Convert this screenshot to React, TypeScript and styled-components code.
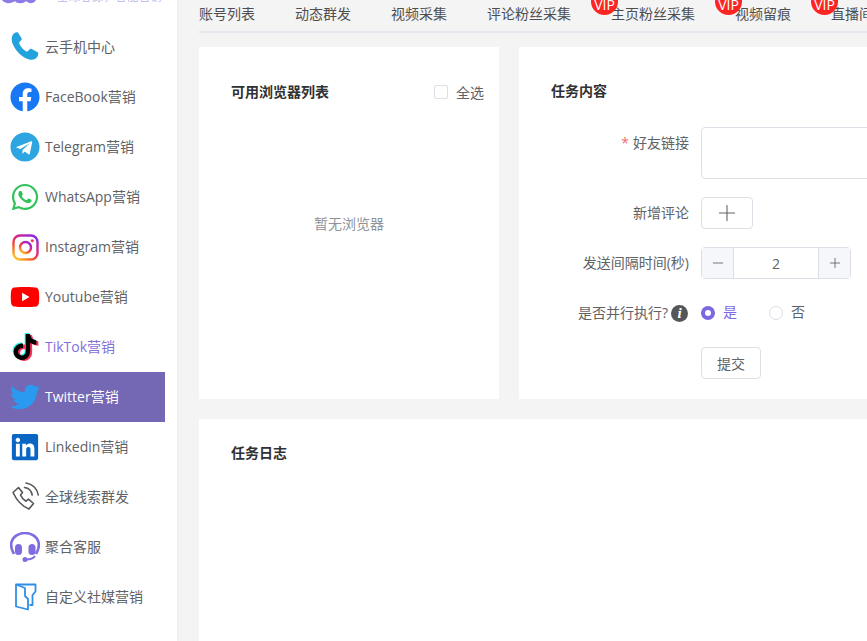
import React from "react";
import styled, { createGlobalStyle } from "styled-components";
import { FaFacebook, FaTelegram, FaWhatsapp, FaTwitter, FaLinkedin, FaTiktok, FaYoutube } from "react-icons/fa";
import { Plus, Minus } from "lucide-react";

const Global = createGlobalStyle`
  html, body { margin: 0; padding: 0; width: 867px; height: 641px; overflow: hidden; background: #f4f4f5; }
  body { font-family: "Open Sans", "Noto Sans CJK SC", sans-serif; font-size: 14px; color: #606266; }
  * { box-sizing: border-box; }
`;

const Page = styled.div`
  display: flex;
  width: 867px;
  height: 641px;
  overflow: hidden;
`;
const Sidebar = styled.aside`
  flex: 0 0 177px;
  background: #fff;
  padding-right: 12px;
  box-shadow: 1px 0 2px rgba(0, 0, 0, 0.04);
`;
const LogoBar = styled.div`
  height: 22px;
  display: flex;
  overflow: hidden;
  align-items: flex-start;
`;
const LogoMark = styled.svg`
  flex: 0 0 auto;
  width: 57px;
  height: 4px;
`;
const LogoSlogan = styled.div`
  margin-top: -9px;
  font-size: 11px;
  line-height: 12px;
  letter-spacing: 0.7px;
  color: #bdb4ee;
  white-space: nowrap;
`;
const NavItem = styled.div<{ $state?: "active" | "hover" }>`
  height: 50px;
  display: flex;
  align-items: center;
  gap: 5px;
  padding: 0 0 2px 10px;
  white-space: nowrap;
  background: ${(p) => (p.$state === "active" ? "#7467b3" : "transparent")};
  color: ${(p) => (p.$state === "active" ? "#fff" : p.$state === "hover" ? "#8471d8" : "#606266")};
`;
const NavIcon = styled.span<{ $start?: boolean }>`
  flex: 0 0 30px;
  width: 30px;
  height: 30px;
  margin-top: 2px;
  display: flex;
  align-items: center;
  justify-content: ${(p) => (p.$start ? "flex-start" : "center")};
`;
const Main = styled.main`
  flex: 0 0 auto;
  width: 760px;
  padding-left: 22px;
  display: flex;
  flex-direction: column;
`;
const Tabs = styled.nav`
  flex: 0 0 33px;
  width: 740px;
  display: flex;
  gap: 40px;
  border-bottom: 2px solid #e4e7ed;
  white-space: nowrap;
  color: #606266;
`;
const Tab = styled.div`
  position: relative;
  flex: 0 0 auto;
  line-height: 27px;
  height: 27px;
  color: #303133;
  opacity: 0.85;
`;
const Vip = styled.span`
  position: absolute;
  left: -20px;
  top: -12px;
  width: 27px;
  height: 27px;
  border-radius: 50%;
  background: #f00;
  color: #fff;
  font-size: 14px;
  line-height: 33px;
  text-align: center;
`;
const Row = styled.div`
  display: flex;
  flex: 0 0 auto;
  gap: 20px;
  margin-top: 14px;
`;
const Card = styled.section`
  background: #fff;
`;
const BrowserCard = styled(Card)`
  flex: 0 0 300px;
  height: 352px;
  padding: 33px 15px 0 32px;
  display: flex;
  flex-direction: column;
`;
const TaskCard = styled(Card)`
  flex: 0 0 440px;
  height: 352px;
  padding: 32px 0 0 32px;
`;
const LogCard = styled(Card)`
  flex: 0 0 260px;
  width: 740px;
  margin-top: 20px;
  padding: 22px 32px;
`;
const CardHead = styled.div`
  display: flex;
  align-items: center;
  justify-content: space-between;
  height: 24px;
`;
const Title = styled.h3`
  margin: 0;
  font-size: 14px;
  line-height: 24px;
  font-weight: 700;
  color: #303133;
`;
const CheckLabel = styled.label`
  display: flex;
  align-items: center;
  gap: 8px;
  color: #606266;
`;
const CheckBox = styled.span`
  width: 14px;
  height: 14px;
  border: 1px solid #dcdfe6;
  border-radius: 2px;
`;
const Empty = styled.div`
  flex: 0 0 auto;
  margin-top: 108px;
  padding-right: 17px;
  text-align: center;
  line-height: 24px;
  color: #909399;
`;
const Form = styled.div`
  margin-top: 24px;
  display: flex;
  flex-direction: column;
  gap: 18px;
`;
const FormRow = styled.div`
  display: flex;
  align-items: flex-start;
`;
const Label = styled.div`
  flex: 0 0 138px;
  height: 32px;
  padding-bottom: 2px;
  display: flex;
  align-items: center;
  justify-content: flex-end;
  white-space: nowrap;
  color: #606266;
`;
const Req = styled.span`
  color: #f56c6c;
  margin-right: 4px;
`;
const Control = styled.div`
  margin-left: 12px;
  min-height: 32px;
  display: flex;
  align-items: center;
`;
const TextArea = styled.div`
  width: 300px;
  height: 52px;
  border: 1px solid #dcdfe6;
  border-radius: 4px;
  background: #fff;
`;
const Btn = styled.div`
  height: 32px;
  padding-bottom: 1px;
  border: 1px solid #dcdfe6;
  border-radius: 4px;
  display: flex;
  align-items: center;
  justify-content: center;
  background: #fff;
  color: #606266;
`;
const AddBtn = styled(Btn)`
  width: 52px;
`;
const SubmitBtn = styled(Btn)`
  width: 60px;
`;
const Stepper = styled.div`
  width: 150px;
  height: 32px;
  border: 1px solid #dcdfe6;
  border-radius: 4px;
  display: flex;
  align-items: center;
`;
const StepBtn = styled.span<{ $side: "l" | "r" }>`
  flex: 0 0 32px;
  height: 30px;
  display: flex;
  align-items: center;
  justify-content: center;
  background: #f5f7fa;
  border-${(p) => (p.$side === "l" ? "right" : "left")}: 1px solid #dcdfe6;
  color: #55565a;
`;
const StepVal = styled.span`
  flex: 1;
  text-align: center;
  color: #606266;
`;
const RadioGroup = styled.div`
  display: flex;
  align-items: center;
  gap: 32px;
`;
const RadioItem = styled.label<{ $on?: boolean }>`
  display: flex;
  align-items: center;
  gap: 8px;
  line-height: 18px;
  color: ${(p) => (p.$on ? "#7c68e0" : "#606266")};
`;
const RadioText = styled.span`
  margin-top: -2px;
`;
const RadioDot = styled.span<{ $on?: boolean }>`
  width: 14px;
  height: 14px;
  border-radius: 50%;
  border: ${(p) => (p.$on ? "4.5px solid #7c68e0" : "1px solid #dcdfe6")};
  background: #fff;
`;
const Info = styled.span`
  width: 17px;
  height: 17px;
  margin: 2px 1px 0 3px;
  border-radius: 50%;
  background: #55565a;
  color: #fff;
  font-family: "Liberation Serif", serif;
  font-style: italic;
  font-weight: 700;
  font-size: 15px;
  line-height: 17px;
  text-align: center;
`;

const PhoneIcon = () => (
  <svg width="30" height="32" viewBox="0 0 30 32">
    <path
      d="M3 3.500C4.500 1.500 7 .8 8 1.600l3.600 5.600c.6 1-.2 2-1.400 3-1 .8-1.200 1.700-.6 3 1.400 3 3.600 5.300 6.200 7 1.100.7 2 .4 2.800-.7 1-1.300 2-2 3.100-1.500l6 3.300c1 .6.800 3.200-1 5.300-1.800 2-4.500 2.700-7.500 1.900C12 26.300 5.400 20 2.400 12.200 1.200 9 1.500 5.600 3 3.500Z"
      fill="#23a3dd"
    />
  </svg>
);

const InstagramIcon = () => (
  <svg width="27" height="27" viewBox="0 0 27 27">
    <defs>
      <linearGradient id="ig" x1="0.15" y1="1" x2="0.85" y2="0">
        <stop offset="0" stopColor="#fdc62e" />
        <stop offset="0.35" stopColor="#f5502f" />
        <stop offset="0.65" stopColor="#d9248f" />
        <stop offset="1" stopColor="#8a2be2" />
      </linearGradient>
    </defs>
    <rect x="1.500" y="1.500" width="24" height="24" rx="6.500" fill="none" stroke="url(#ig)" strokeWidth="2.400" />
    <circle cx="13.500" cy="13.500" r="5.500" fill="none" stroke="url(#ig)" strokeWidth="2.400" />
    <circle cx="20.200" cy="6.800" r="1.600" fill="url(#ig)" />
  </svg>
);

const TiktokStack = styled.span`
  position: relative;
  width: 26px;
  height: 26px;
`;
const TiktokLayer = styled.span<{ $c: string; $x: number; $y: number }>`
  position: absolute;
  left: ${(p) => p.$x}px;
  top: ${(p) => p.$y}px;
  color: ${(p) => p.$c};
  display: flex;
`;
const TiktokIcon = () => (
  <TiktokStack>
    <TiktokLayer $c="#25f4ee" $x={-1.5} $y={-1}><FaTiktok size={26} /></TiktokLayer>
    <TiktokLayer $c="#fe2c55" $x={1.5} $y={1}><FaTiktok size={26} /></TiktokLayer>
    <TiktokLayer $c="#000" $x={0} $y={0}><FaTiktok size={26} /></TiktokLayer>
  </TiktokStack>
);

const CallIcon = () => (
  <svg width="30" height="30" viewBox="0 0 30 30" fill="none" stroke="#55565a" strokeWidth="1.600" strokeLinejoin="round">
    <path d="M3 10.500 8.500 5.500 12.500 10.500 10.500 13c1 2.500 3 4.700 5.500 6.200l2.500-2 5 4.300-4.500 5.500C12.500 24.500 6.500 18 3 10.500Z" />
    <path d="M14.500 5.500c4 .5 7 3.500 7.700 7.500" strokeLinecap="round" />
    <path d="M16 1c6.500.8 11.500 6 12.300 12" strokeLinecap="round" />
  </svg>
);

const HeadsetIcon = () => (
  <svg width="30" height="30" viewBox="0 0 30 30">
    <path d="M3.500 21C1.200 17 .8 13 1.500 10 3 4.500 9 1 15 1s12 3.500 13.500 9c.7 3 .3 7-2 11" fill="none" stroke="#7f6ce0" strokeWidth="2.600" strokeLinecap="round" />
    <rect x="5" y="12" width="7" height="11" rx="3.500" fill="#7f6ce0" />
    <rect x="18.500" y="12" width="7" height="11" rx="3.500" fill="#7f6ce0" />
    <path d="M25 24c-2 3-5 3.500-9 3.500" fill="none" stroke="#7f6ce0" strokeWidth="2" />
    <circle cx="15" cy="27.500" r="2.500" fill="#7f6ce0" />
  </svg>
);

const DoorIcon = () => (
  <svg width="24" height="28" viewBox="0 0 24 28" fill="none" stroke="#2f8fe6" strokeWidth="1.800" strokeLinejoin="round">
    <path d="M3 1.500h19.500v7l-3 3.500v10h-3" />
    <path d="M3 1.500v22l12 3V16l-3-3V5L3 1.500Z" fill="#fff" />
  </svg>
);

const nav: { label: string; icon: React.ReactNode; state?: "active" | "hover"; start?: boolean }[] = [
  { label: "云手机中心", icon: <PhoneIcon /> },
  { label: "FaceBook营销", icon: <FaFacebook size={30} color="#1877f2" /> },
  { label: "Telegram营销", icon: <FaTelegram size={30} color="#2ca5e0" /> },
  { label: "WhatsApp营销", icon: <FaWhatsapp size={30} color="#2fc25b" />, start: true },
  { label: "Instagram营销", icon: <InstagramIcon /> },
  { label: "Youtube营销", icon: <FaYoutube size={30} color="#f00" /> },
  { label: "TikTok营销", icon: <TiktokIcon />, state: "hover" },
  { label: "Twitter营销", icon: <FaTwitter size={30} color="#2a9af0" />, state: "active" },
  { label: "Linkedin营销", icon: <FaLinkedin size={30} color="#0a66c2" />, start: true },
  { label: "全球线索群发", icon: <CallIcon /> },
  { label: "聚合客服", icon: <HeadsetIcon /> },
  { label: "自定义社媒营销", icon: <DoorIcon /> },
];

const tabs: { label: string; vip?: boolean }[] = [
  { label: "账号列表" },
  { label: "动态群发" },
  { label: "视频采集" },
  { label: "评论粉丝采集" },
  { label: "主页粉丝采集", vip: true },
  { label: "视频留痕", vip: true },
  { label: "直播间互动", vip: true },
];

export default function App() {
  return (
    <Page>
      <Global />
      <Sidebar>
        <LogoBar>
          <LogoMark viewBox="0 0 57 4">
            <path d="M2 0c3 4 9 4 13 1 1.500 3 9 3 11 0 3 3 8 3 10-1Z" fill="#8f7be6" />
          </LogoMark>
          <LogoSlogan>全球客源，智能营销</LogoSlogan>
        </LogoBar>
        {nav.map((n) => (
          <NavItem key={n.label} $state={n.state}>
            <NavIcon $start={n.start}>{n.icon}</NavIcon>
            {n.label}
          </NavItem>
        ))}
      </Sidebar>
      <Main>
        <Tabs>
          {tabs.map((t) => (
            <Tab key={t.label}>
              {t.vip && <Vip>VIP</Vip>}
              {t.label}
            </Tab>
          ))}
        </Tabs>
        <Row>
          <BrowserCard>
            <CardHead>
              <Title>可用浏览器列表</Title>
              <CheckLabel>
                <CheckBox />
                全选
              </CheckLabel>
            </CardHead>
            <Empty>暂无浏览器</Empty>
          </BrowserCard>
          <TaskCard>
            <Title>任务内容</Title>
            <Form>
              <FormRow>
                <Label>
                  <Req>*</Req>好友链接
                </Label>
                <Control>
                  <TextArea />
                </Control>
              </FormRow>
              <FormRow>
                <Label>新增评论</Label>
                <Control>
                  <AddBtn>
                    <Plus size={26} strokeWidth={1} />
                  </AddBtn>
                </Control>
              </FormRow>
              <FormRow>
                <Label>发送间隔时间(秒)</Label>
                <Control>
                  <Stepper>
                    <StepBtn $side="l">
                      <Minus size={16} strokeWidth={1.2} />
                    </StepBtn>
                    <StepVal>2</StepVal>
                    <StepBtn $side="r">
                      <Plus size={16} strokeWidth={1.2} />
                    </StepBtn>
                  </Stepper>
                </Control>
              </FormRow>
              <FormRow>
                <Label>
                  是否并行执行?<Info>i</Info>
                </Label>
                <Control>
                  <RadioGroup>
                    <RadioItem $on>
                      <RadioDot $on />
                      <RadioText>是</RadioText>
                    </RadioItem>
                    <RadioItem>
                      <RadioDot />
                      <RadioText>否</RadioText>
                    </RadioItem>
                  </RadioGroup>
                </Control>
              </FormRow>
              <FormRow>
                <Label />
                <Control>
                  <SubmitBtn>提交</SubmitBtn>
                </Control>
              </FormRow>
            </Form>
          </TaskCard>
        </Row>
        <LogCard>
          <Title>任务日志</Title>
        </LogCard>
      </Main>
    </Page>
  );
}
